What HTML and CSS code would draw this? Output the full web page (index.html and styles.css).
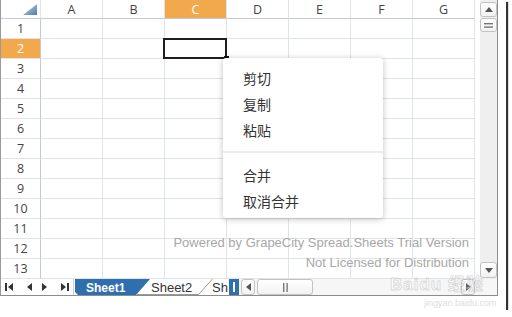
FILE: index.html
```html
<!DOCTYPE html>
<html>
<head>
<meta charset="utf-8">
<link rel="stylesheet" href="styles.css">
</head>
<body>
<div class="shot">
  <div class="sheet">
    <div class="main">
      <div class="grid">
        <div class="corner"><svg width="16" height="12" viewBox="0 0 16 12"><defs><linearGradient id="cg" x1="0" y1="0" x2="1" y2="1"><stop offset="0" stop-color="#c6d6e8"/><stop offset="1" stop-color="#4f7cae"/></linearGradient></defs><polygon points="15,0 15,11 1,11" fill="url(#cg)"/></svg></div>
        <div class="ch">A</div><div class="ch">B</div><div class="ch hl">C</div><div class="ch">D</div><div class="ch">E</div><div class="ch">F</div><div class="ch">G</div>
        <div class="rh">1</div><div class="c"></div><div class="c"></div><div class="c"></div><div class="c"></div><div class="c"></div><div class="c"></div><div class="c"></div>
        <div class="rh hl">2</div><div class="c"></div><div class="c"></div><div class="c"></div><div class="c"></div><div class="c"></div><div class="c"></div><div class="c"></div>
        <div class="rh">3</div><div class="c"></div><div class="c"></div><div class="c"></div><div class="c"></div><div class="c"></div><div class="c"></div><div class="c"></div>
        <div class="rh">4</div><div class="c"></div><div class="c"></div><div class="c"></div><div class="c"></div><div class="c"></div><div class="c"></div><div class="c"></div>
        <div class="rh">5</div><div class="c"></div><div class="c"></div><div class="c"></div><div class="c"></div><div class="c"></div><div class="c"></div><div class="c"></div>
        <div class="rh">6</div><div class="c"></div><div class="c"></div><div class="c"></div><div class="c"></div><div class="c"></div><div class="c"></div><div class="c"></div>
        <div class="rh">7</div><div class="c"></div><div class="c"></div><div class="c"></div><div class="c"></div><div class="c"></div><div class="c"></div><div class="c"></div>
        <div class="rh">8</div><div class="c"></div><div class="c"></div><div class="c"></div><div class="c"></div><div class="c"></div><div class="c"></div><div class="c"></div>
        <div class="rh">9</div><div class="c"></div><div class="c"></div><div class="c"></div><div class="c"></div><div class="c"></div><div class="c"></div><div class="c"></div>
        <div class="rh">10</div><div class="c"></div><div class="c"></div><div class="c"></div><div class="c"></div><div class="c"></div><div class="c"></div><div class="c"></div>
        <div class="rh">11</div><div class="c"></div><div class="c"></div><div class="c"></div><div class="c"></div><div class="c"></div><div class="c"></div><div class="c"></div>
        <div class="rh">12</div><div class="c"></div><div class="c"></div><div class="c"></div><div class="c"></div><div class="c"></div><div class="c"></div><div class="c"></div>
        <div class="rh">13</div><div class="c"></div><div class="c"></div><div class="c"></div><div class="c"></div><div class="c"></div><div class="c"></div><div class="c"></div>
      </div>
      <div class="vscroll">
        <div class="vtrack">
          <div class="vbtn"><svg width="8" height="5" viewBox="0 0 8 5"><polygon points="0,5 8,5 4,0" fill="#555"/></svg></div>
          <div class="vbtn vthumb"><svg width="9" height="5" viewBox="0 0 9 5"><rect x="0" y="0" width="9" height="1.4" fill="#777"/><rect x="0" y="3.4" width="9" height="1.4" fill="#777"/></svg></div>
          <div class="vspace"></div>
          <div class="vbtn vdown"><svg width="8" height="5" viewBox="0 0 8 5"><polygon points="0,0 8,0 4,5" fill="#555"/></svg></div>
        </div>
      </div>
    </div>
    <div class="tabbar">
      <div class="nav">
        <svg width="72" height="16" viewBox="0 0 72 16">
          <rect x="4" y="4" width="2" height="8" fill="#333"/><polygon points="12,4 12,12 7,8" fill="#333"/>
          <polygon points="31,4 31,12 26,8" fill="#333"/>
          <polygon points="41,4 41,12 46,8" fill="#333"/>
          <polygon points="60,4 60,12 65,8" fill="#333"/><rect x="66" y="4" width="2" height="8" fill="#333"/>
        </svg>
      </div>
      <div class="tabs">
        <svg width="165" height="16" viewBox="0 0 165 16">
          <polygon points="63,16 77,0 140,0 126,16" fill="#fff"/>
          <polyline points="61,16 76,0" fill="none" stroke="#fff" stroke-width="1.5"/>
          <polygon points="1,0 76,0 62,16 4,16 1,13" fill="#2f6fae"/>
          <polyline points="62.5,15.5 124.5,15.5 138.5,0" fill="none" stroke="#9a9a9a" stroke-width="1"/>
          <text x="12" y="12.5" class="t1">Sheet1</text>
          <text x="77" y="12.5" class="t2">Sheet2</text>
          <text x="138" y="12.5" class="t2">Sh</text>
          <rect x="155" y="0" width="10" height="16" fill="#2f6fae"/>
          <rect x="159" y="3" width="2" height="10" fill="#fff"/>
        </svg>
      </div>
      <div class="hscroll">
        <div class="hbtn"><svg width="5" height="8" viewBox="0 0 5 8"><polygon points="5,0 5,8 0,4" fill="#555"/></svg></div>
        <div class="hbtn hthumb"><svg width="5" height="9" viewBox="0 0 5 9"><rect x="0" y="0" width="1.4" height="9" fill="#777"/><rect x="3.4" y="0" width="1.4" height="9" fill="#777"/></svg></div>
        <div class="hspace"></div>
        <div class="hbtn"><svg width="5" height="8" viewBox="0 0 5 8"><polygon points="0,0 0,8 5,4" fill="#555"/></svg></div>
      </div>
      <div class="scorner"></div>
    </div>
    <div class="sel"></div>
    <div class="handle"></div>
    <div class="trial">Powered by GrapeCity Spread.Sheets Trial Version<br>Not Licensed for Distribution</div>
    <div class="menu">
      <div class="mi">剪切</div>
      <div class="mi">复制</div>
      <div class="mi">粘贴</div>
      <div class="sep"></div>
      <div class="mi">合并</div>
      <div class="mi">取消合并</div>
    </div>
  </div>
  <div class="baidu">Baidu 经验</div>
  <div class="baidu-url">jingyan.baidu.com</div>
</div>
</body>
</html>
```

FILE: styles.css
```css
* { box-sizing: border-box; }
body { margin: 0; background: #fff; }

.shot {
  position: relative;
  width: 506px;
  height: 310px;
  background: #fff;
  box-shadow: 2px 2px 1px #333;
}

.sheet {
  position: relative;
  width: 498px;
  height: 296px;
  border-left: 1px solid #9a9a9a;
  border-right: 1px solid #8c8c8c;
  border-bottom: 1px solid #8c8c8c;
  display: flex;
  flex-direction: column;
  background: #fff;
}

.main { display: flex; height: 279px; }

.grid {
  display: grid;
  grid-template-columns: 40px repeat(7, 62px);
  grid-template-rows: 19px repeat(13, 20px);
}
.grid > div {
  border-right: 1px solid #dfe3ea;
  border-bottom: 1px solid #dfe3ea;
  display: flex;
  align-items: center;
  justify-content: center;
  font: 12.5px "Open Sans", "Noto Sans", sans-serif;
  color: #444;
}
.grid > .rh { border-right-color: #c4cad3; }
.grid > .ch, .grid > .corner { border-bottom-color: #c4cad3; }
.grid > .corner { justify-content: flex-end; align-items: flex-end; padding: 0 2px 2px 0; }
.grid > .hl { background: #f1a94b; color: #fff; }

.vscroll { width: 22px; padding-left: 5px; display: flex; }
.vtrack {
  flex: 1;
  background: #efefef;
  display: flex;
  flex-direction: column;
  padding: 2px 0 1px;
}
.vbtn {
  height: 15px;
  border: 1px solid #c2c2c2;
  border-radius: 3px;
  background: linear-gradient(#ffffff, #f2f2f2);
  display: flex;
  align-items: center;
  justify-content: center;
}
.vthumb { margin-top: 1px; height: 14px; }
.vspace { flex: 1; }
.vdown { height: 16px; }

.tabbar { display: flex; height: 16px; background: #fff; }
.nav { width: 73px; border-right: 1px solid #cfcfcf; }
.nav svg, .tabs svg { display: block; }
.tabs { width: 165px; }
.t1 { font: bold 12px "Liberation Sans", Arial, sans-serif; fill: #fff; }
.t2 { font: 13px "Liberation Sans", Arial, sans-serif; fill: #333; }

.hscroll {
  flex: 1;
  display: flex;
  background: #f6f6f6;
  padding-right: 2px;
}
.hbtn {
  width: 14px;
  height: 16px;
  margin-left: 2px;
  border: 1px solid #c2c2c2;
  border-radius: 3px;
  background: linear-gradient(#ffffff, #f2f2f2);
  display: flex;
  align-items: center;
  justify-content: center;
}
.hthumb { width: 56px; margin-left: 2px; }
.hspace { flex: 1; }
.scorner { width: 20px; background: #f6f6f6; }

.sel {
  position: absolute;
  left: 162px;
  top: 38px;
  width: 64px;
  height: 21px;
  border: 2px solid #1e1e1e;
}
.handle {
  position: absolute;
  left: 223px;
  top: 56px;
  width: 5px;
  height: 5px;
  background: #111;
}

.trial {
  position: absolute;
  right: 28px;
  top: 233px;
  text-align: right;
  font: 13px "Liberation Sans", Arial, sans-serif;
  line-height: 20px;
  color: #a8a8a8;
}

.menu {
  position: absolute;
  left: 222px;
  top: 58px;
  width: 160px;
  padding: 7px 0 4px;
  background: #fff;
  border-radius: 3px;
  box-shadow: 0 1px 6px rgba(0, 0, 0, 0.25);
  font: 14px "Noto Sans CJK SC", sans-serif;
  color: #333;
}
.mi { height: 26px; line-height: 26px; padding-left: 20px; }
.sep { height: 2px; margin: 8px 0 9px; background: #ececec; }

.baidu {
  position: absolute;
  left: 390px;
  top: 275px;
  font: bold 17px "Liberation Sans", "Noto Sans CJK SC", sans-serif;
  line-height: 19px;
  color: rgba(255, 255, 255, 0.45);
  -webkit-text-stroke: 0.8px rgba(150, 150, 150, 0.35);
  letter-spacing: 1px;
}
.baidu-url {
  position: absolute;
  left: 424px;
  top: 298px;
  font: 9px "Liberation Sans", sans-serif;
  line-height: 10px;
  color: rgba(190, 190, 190, 0.55);
}
```
